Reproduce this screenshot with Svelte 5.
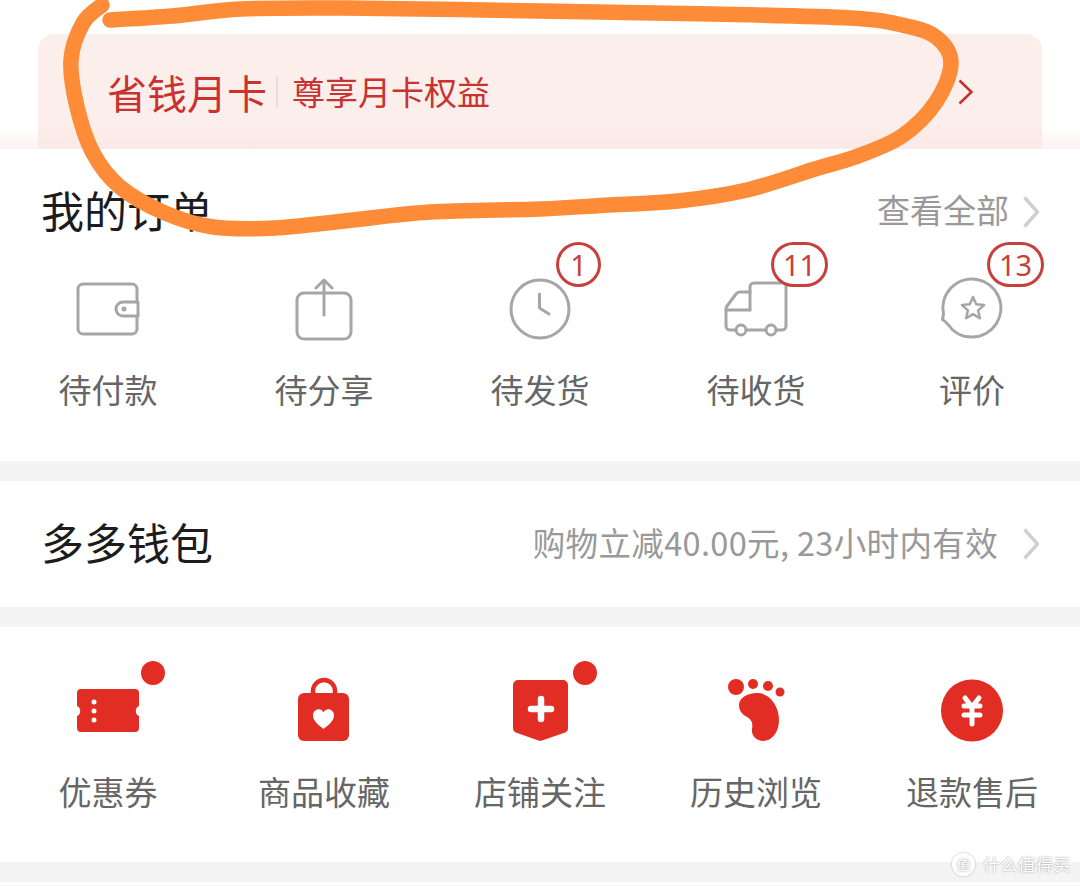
<script>
  const orders = [
    { icon: "wallet", label: "待付款" },
    { icon: "share", label: "待分享" },
    { icon: "clock", label: "待发货", badge: 1 },
    { icon: "truck", label: "待收货", badge: 11 },
    { icon: "review", label: "评价", badge: 13 }
  ];

  const tools = [
    { icon: "ticket", label: "优惠券", dot: true },
    { icon: "bag", label: "商品收藏" },
    { icon: "shop", label: "店铺关注", dot: true },
    { icon: "foot", label: "历史浏览" },
    { icon: "yen", label: "退款售后" }
  ];

  // the hand drawn circle on top of the screenshot
  const scribble = [
    [102, 5], [83, 23], [71, 60], [77, 107], [93, 153], [120, 187], [165, 213],
    [213, 227], [275, 228], [344, 221], [430, 212], [540, 209], [609, 205],
    [678, 201], [747, 190], [815, 169], [858, 156], [902, 136], [936, 102], [951, 63],
    [936, 37], [902, 25], [850, 18], [712, 14], [540, 11], [344, 8], [241, 9],
    [172, 16], [110, 20]
  ];

  // catmull-rom through the points, as cubic segments
  function smooth(pts) {
    let d = `M${pts[0][0]} ${pts[0][1]}`;
    for (let i = 0; i < pts.length - 1; i++) {
      const a = pts[Math.max(i - 1, 0)];
      const b = pts[i];
      const c = pts[i + 1];
      const e = pts[Math.min(i + 2, pts.length - 1)];
      const x1 = b[0] + (c[0] - a[0]) / 6;
      const y1 = b[1] + (c[1] - a[1]) / 6;
      const x2 = c[0] - (e[0] - b[0]) / 6;
      const y2 = c[1] - (e[1] - b[1]) / 6;
      d += ` C${x1} ${y1} ${x2} ${y2} ${c[0]} ${c[1]}`;
    }
    return d;
  }
</script>

{#snippet chevron()}
  <svg class="chevron" width="16" height="32" viewBox="0 0 16 32">
    <path d="M1.5 1.5 L14.5 16 L1.5 30.5" />
  </svg>
{/snippet}

{#snippet icon(name)}
  <svg class="glyph" width="80" height="68" viewBox="0 0 80 68">
    {#if name === "wallet"}
      <g class="line">
        <path d="M69 27V14a5 5 0 0 0-5-5H15a5 5 0 0 0-5 5v40a5 5 0 0 0 5 5h49a5 5 0 0 0 5-5V41" />
        <path d="M70 27H55a7 7 0 0 0 0 14h15z" />
      </g>
      <circle cx="56" cy="34" r="2.5" fill="#a6a6a6" />
    {:else if name === "share"}
      <g class="line">
        <rect x="13" y="18" width="54" height="46" rx="7" />
        <path d="M40 40V5M32 13l8-8 8 8" />
      </g>
    {:else if name === "clock"}
      <g class="line">
        <circle cx="40" cy="34" r="29" />
        <path d="M39.5 19V31a3 3 0 0 0 1.5 3l8 5" />
      </g>
    {:else if name === "truck"}
      <g class="line">
        <path d="M34 35V12a4 4 0 0 1 4-4H70V51a4 4 0 0 1-4 4H60" />
        <path d="M20 55H14a4 4 0 0 1-4-4V34a5 5 0 0 1 1-3L20 19a5 5 0 0 1 4-2H34" />
        <path d="M10 35H34M30 55H50" />
        <circle cx="25" cy="55" r="5" />
        <circle cx="55" cy="55" r="5" />
      </g>
    {:else if name === "review"}
      <g class="line">
        <path d="M16 49.500A29 29 0 1 0 11.500 39L10.500 44.500Q13 46 16 49.500" />
        <path d="M41 22l3.2 7.3 7.9.8-6 5.3 1.8 7.8-6.900-4.100-6.900 4.100 1.800-7.800-6-5.300 7.900-.8z" stroke-width="2.500" />
      </g>
    {:else if name === "ticket"}
      <path class="solid" d="M13 13H67a4 4 0 0 1 4 4V30a5.500 5.500 0 0 0 0 10V52a4 4 0 0 1-4 4H13a4 4 0 0 1-4-4V40a5.500 5.500 0 0 0 0-10V17a4 4 0 0 1 4-4z" />
      <circle cx="26" cy="26" r="2.500" fill="#fff" />
      <circle cx="26" cy="35" r="2.500" fill="#fff" />
      <circle cx="26" cy="44" r="2.500" fill="#fff" />
    {:else if name === "bag"}
      <path d="M29 19V15a11 11 0 0 1 22 0V19" fill="none" stroke="#e22d24" stroke-width="4.500" />
      <rect class="solid" x="14" y="17" width="51" height="48" rx="6" />
      <path d="M39.500 53C36 50 29 45.500 29 39.500C29 33 37 31 39.500 36.500C42 31 50 33 50 39.500C50 45.500 43 50 39.500 53Z" fill="#fff" />
    {:else if name === "shop"}
      <path class="solid" d="M18 4H63a5 5 0 0 1 5 5V52a5 5 0 0 1-3.500 4.800L42 64.500a6 6 0 0 1-3.500 0L16.500 56.800A5 5 0 0 1 13 52V9a5 5 0 0 1 5-5z" />
      <path d="M31 33H51M41 23V43" stroke="#fff" stroke-width="6.500" stroke-linecap="round" />
    {:else if name === "foot"}
      <circle class="solid" cx="20" cy="11" r="8" />
      <circle class="solid" cx="37" cy="8" r="5" />
      <circle class="solid" cx="52" cy="10" r="5" />
      <circle class="solid" cx="64" cy="16" r="4.500" />
      <path class="solid" d="M41 17C54 17 63 30 63 44C63 56 56 65 47 65C40 65 35 59 36 53C37 47 36 44 31 41C25 38 23 33 23 29C23 22 31 17 41 17Z" />
    {:else if name === "yen"}
      <circle class="solid" cx="40" cy="34.500" r="31" />
      <path d="M33 22L40 31L47 22M32 30H48M32 39H48M40 31V48" fill="none" stroke="#fff" stroke-width="5" stroke-linecap="round" stroke-linejoin="round" />
    {/if}
  </svg>
{/snippet}

<div class="page">
  <div class="top">
    <div class="month-card">
      <span class="month-title">省钱月卡</span>
      <i class="month-sep"></i>
      <span class="month-sub">尊享月卡权益</span>
      <svg class="month-arrow" width="15" height="26" viewBox="0 0 15 26">
        <path d="M1.500 1.500 L13.500 13 L1.500 24.500" />
      </svg>
    </div>
  </div>

  <section class="orders">
    <div class="row">
      <h2>我的订单</h2>
      <div class="more">
        <span>查看全部</span>
        {@render chevron()}
      </div>
    </div>
    <div class="grid">
      {#each orders as item}
        <div class="item">
          <div class="icon">
            {@render icon(item.icon)}
            {#if item.badge}
              <span class="badge" class:wide={item.badge > 9}>{item.badge}</span>
            {/if}
          </div>
          <span class="label">{item.label}</span>
        </div>
      {/each}
    </div>
  </section>

  <section>
    <div class="row">
      <h2>多多钱包</h2>
      <div class="more wallet">
        <span>购物立减40.00元, 23小时内有效</span>
        {@render chevron()}
      </div>
    </div>
  </section>

  <section class="tools">
    <div class="grid">
      {#each tools as item}
        <div class="item">
          <div class="icon">
            {@render icon(item.icon)}
            {#if item.dot}
              <span class="dot"></span>
            {/if}
          </div>
          <span class="label">{item.label}</span>
        </div>
      {/each}
    </div>
  </section>

  <div class="foot"></div>

  <svg class="scribble" width="1080" height="240" viewBox="0 0 1080 240">
    <path d={smooth(scribble)} />
  </svg>

  <div class="watermark">
    <span class="mark">值</span>
    <span>什么值得买</span>
  </div>
</div>

<style>
  :global(body) {
    background: #fff;
  }

  .page {
    position: relative;
    width: 1080px;
    height: 886px;
    overflow: hidden;
    background: #f4f4f4;
    font-family: "Noto Sans CJK SC", "Noto Sans", sans-serif;
  }

  .top {
    height: 149px;
    padding: 34px 38px 0;
    box-sizing: border-box;
    background: linear-gradient(#fff 127px, #fcf2f1 149px);
  }

  .month-card {
    display: flex;
    align-items: center;
    height: 115px;
    padding: 0 69px 0 69px;
    box-sizing: border-box;
    border-radius: 16px 16px 0 0;
    background: linear-gradient(#fceeeb 80%, #f9e9e8);
    color: #c9322e;
  }

  .month-title {
    font-size: 40px;
    line-height: 1;
  }

  .month-sep {
    width: 2px;
    height: 30px;
    margin: 0 14px 0 9px;
    background: #eed9d5;
  }

  .month-sub {
    font-size: 33px;
    line-height: 1;
  }

  .month-arrow {
    margin-left: auto;
  }

  .month-arrow path {
    fill: none;
    stroke: #c0302f;
    stroke-width: 2.500;
  }

  section {
    margin-bottom: 20px;
    background: #fff;
  }

  .orders {
    height: 312px;
  }

  .tools {
    height: 235px;
    padding-top: 49px;
    box-sizing: border-box;
  }

  .row {
    display: flex;
    align-items: center;
    justify-content: space-between;
    height: 126px;
    padding: 0 41px 6px 41px;
    box-sizing: border-box;
  }

  h2 {
    margin: 0;
    font-size: 43px;
    font-weight: 400;
    color: #1c1c1c;
  }

  .more {
    display: flex;
    align-items: center;
    gap: 14px;
    font-size: 33px;
    color: #999;
  }

  .more.wallet {
    gap: 25px;
    font-size: 32.500px;
    letter-spacing: 0.350px;
  }

  .chevron {
    margin-top: 6px;
  }

  .chevron path {
    fill: none;
    stroke: #cfcfcf;
    stroke-width: 3.500;
  }

  .grid {
    display: grid;
    grid-template-columns: repeat(5, 216px);
  }

  .item {
    display: flex;
    flex-direction: column;
    align-items: center;
  }

  .icon {
    position: relative;
    width: 80px;
    height: 68px;
  }

  .glyph {
    display: block;
  }

  .line {
    fill: none;
    stroke: #a6a6a6;
    stroke-width: 3;
    stroke-linejoin: round;
    stroke-linecap: round;
  }

  .solid {
    fill: #e22d24;
  }

  .label {
    margin-top: 21px;
    font-size: 33px;
    line-height: 50px;
    color: #666;
  }

  .tools .label {
    margin-top: 22px;
  }

  .badge {
    position: absolute;
    top: -33px;
    left: 56px;
    min-width: 45px;
    height: 45px;
    padding: 0 6px;
    box-sizing: border-box;
    display: flex;
    align-items: center;
    justify-content: center;
    border: 3px solid #c8403c;
    border-radius: 23px;
    background: #fff;
    color: #c8403c;
    font-family: "Noto Sans", sans-serif;
    font-size: 29px;
    line-height: 1;
  }

  .badge.wide {
    left: 55px;
    min-width: 57px;
  }

  .dot {
    position: absolute;
    top: -15px;
    left: 73px;
    width: 24px;
    height: 24px;
    border-radius: 50%;
    background: #e22d24;
  }

  .foot {
    height: 3px;
    margin-top: 20px;
    background: #fff;
  }

  .scribble {
    position: absolute;
    top: 0;
    left: 0;
  }

  .scribble path {
    fill: none;
    stroke: #fd8b38;
    stroke-width: 15.500;
    stroke-linecap: round;
    stroke-linejoin: round;
  }

  .watermark {
    position: absolute;
    top: 852px;
    left: 952px;
    display: flex;
    align-items: center;
    gap: 8px;
    font-size: 17.500px;
    line-height: 24px;
    color: #fff;
    text-shadow: 0 0 2px #8f8f8f;
  }

  .mark {
    display: flex;
    align-items: center;
    justify-content: center;
    width: 23px;
    height: 23px;
    border-radius: 50%;
    background: rgba(255, 255, 255, 0.9);
    box-shadow: 0 0 2px #999;
    font-size: 14px;
  }
</style>
